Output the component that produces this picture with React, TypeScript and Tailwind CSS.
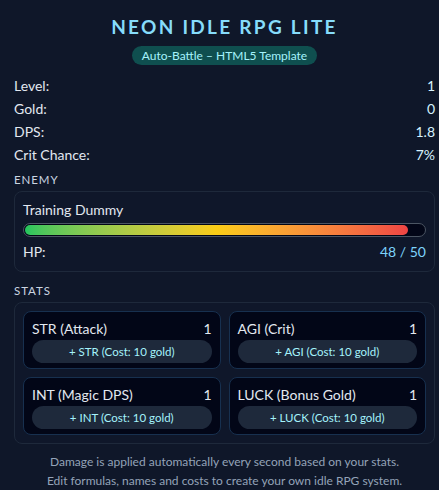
const stats = [
  { label: "Level:", value: "1" },
  { label: "Gold:", value: "0" },
  { label: "DPS:", value: "1.8" },
  { label: "Crit Chance:", value: "7%" },
];

const attrs = [
  { name: "STR (Attack)", key: "STR", level: 1 },
  { name: "AGI (Crit)", key: "AGI", level: 1 },
  { name: "INT (Magic DPS)", key: "INT", level: 1 },
  { name: "LUCK (Bonus Gold)", key: "LUCK", level: 1 },
];

export default function App() {
  const hp = 48;
  const maxHp = 50;

  return (
    <div className="min-h-screen bg-[#0f1729] font-['Lato',sans-serif] text-[14px] text-[#e2e8f0]">
      <div className="pl-[14px] pr-[4px] pt-[13px] pb-4">
        <h1 className="text-center text-[19px] leading-[28px] font-bold tracking-[0.12em] text-[#86dcfb]">
          NEON IDLE RPG LITE
        </h1>
        <div className="mt-[5px] flex justify-center">
          <span className="rounded-full bg-[#0f4f4f] px-[10px] text-[12px] leading-[19px] text-[#a5f3fc]">
            Auto-Battle – HTML5 Template
          </span>
        </div>

        <div className="mt-[9px]">
          {stats.map((s) => (
            <div key={s.label} className="flex h-[23px] items-center justify-between">
              <span>{s.label}</span>
              <span className="text-[#d6f1fd]">{s.value}</span>
            </div>
          ))}
        </div>

        <div className="mt-[6px] mb-[3px] text-[11.5px] leading-[16px] tracking-[0.08em] text-[#cbd5e1]">ENEMY</div>
        <div className="rounded-lg border border-[#1e293b] bg-[#0f172a] px-[8px] pt-[8px] pb-[9px]">
          <div className="leading-[20px]">Training Dummy</div>
          <div className="mt-[3px] h-[14px] rounded-full border border-[#4b5563] bg-[#020617] p-[1px]">
            <div
              className="h-full rounded-full bg-gradient-to-r from-[#22c55e] via-[#facc15] to-[#ef4444]"
              style={{ width: `${(hp / maxHp) * 100}%` }}
            />
          </div>
          <div className="mt-[5px] flex justify-between leading-[20px]">
            <span>HP:</span>
            <span className="text-[#7dd3fc]">
              {hp} / {maxHp}
            </span>
          </div>
        </div>

        <div className="mt-[11px] mb-[3px] text-[11.5px] leading-[16px] tracking-[0.08em] text-[#cbd5e1]">STATS</div>
        <div className="grid grid-cols-2 gap-[8px] rounded-lg border border-[#1e293b] bg-[#0f172a] p-[8px]">
          {attrs.map((a) => (
            <div key={a.key} className="rounded-lg border border-[#17304f] bg-[#020617] px-[8px] pt-[7px] pb-[5px]">
              <div className="flex justify-between leading-[20px]">
                <span>{a.name}</span>
                <span>{a.level}</span>
              </div>
              <button className="mt-[1px] h-[23px] w-full rounded-full bg-[#1e293b] text-[11.5px] text-[#a5f3fc]">
                + {a.key} (Cost: 10 gold)
              </button>
            </div>
          ))}
        </div>

        <p className="mt-[8px] text-center text-[12px] leading-[19px] text-[#94a3b8]">
          Damage is applied automatically every second based on your stats.
          <br />
          Edit formulas, names and costs to create your own idle RPG system.
        </p>
      </div>
    </div>
  );
}
